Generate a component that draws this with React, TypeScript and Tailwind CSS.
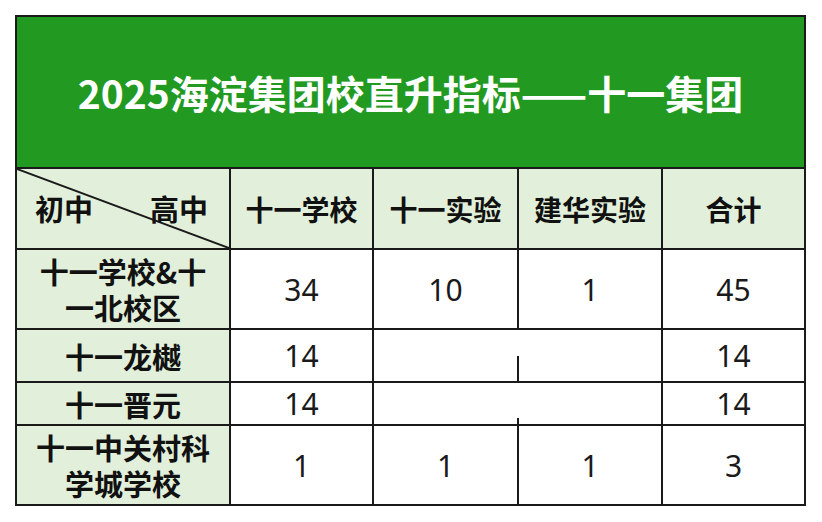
import React from "react";

const cjk = { fontFamily: '"Noto Sans CJK SC", "Noto Sans", sans-serif' };
const num = { fontFamily: '"Noto Sans", "Noto Sans CJK SC", sans-serif' };

function Label({ lines }: { lines: string[] }) {
  return (
    <div
      className="bg-[#e2efda] flex flex-col items-center justify-center text-center text-[29px] font-bold leading-[36px] text-[#111]"
      style={cjk}
    >
      {lines.map((l) => (
        <div key={l} className="h-[36px] leading-[36px]">
          {l}
        </div>
      ))}
    </div>
  );
}

function Head({ children }: { children: React.ReactNode }) {
  return (
    <div
      className="bg-[#e2efda] flex items-center justify-center text-[28px] font-bold text-[#111]"
      style={cjk}
    >
      {children}
    </div>
  );
}

function Num({ children }: { children?: React.ReactNode }) {
  return (
    <div
      className="bg-white flex items-center justify-center text-[30px] text-[#1a1a1a]"
      style={num}
    >
      {children}
    </div>
  );
}

export default function App() {
  return (
    <div className="w-[822px] h-[522px] bg-white pt-[15px] pl-[15px]">
      <div className="w-[791px] bg-[#1a1a1a] p-[2px] grid gap-[2px] grid-cols-[212px_141px_143px_142px_141px] grid-rows-[150px_79px_78px_51px_41px_78px]">
        <div
          className="col-span-5 bg-[#229a22] flex items-center justify-center text-white text-[39px] font-bold"
          style={cjk}
        >
          2025海淀集团校直升指标——十一集团
        </div>

        <div className="relative bg-[#e2efda] flex items-center justify-between pl-[18px] pr-[21px] text-[29px] font-bold text-[#111]" style={cjk}>
          <svg className="absolute inset-0" width="212" height="79" viewBox="0 0 212 79">
            <line x1="0" y1="0" x2="212" y2="79" stroke="#1a1a1a" strokeWidth="2" />
          </svg>
          <span className="relative">初中</span>
          <span className="relative">高中</span>
        </div>
        <Head>十一学校</Head>
        <Head>十一实验</Head>
        <Head>建华实验</Head>
        <Head>合计</Head>

        <Label lines={["十一学校&十", "一北校区"]} />
        <Num>34</Num>
        <Num>10</Num>
        <Num>1</Num>
        <Num>45</Num>

        <Label lines={["十一龙樾"]} />
        <Num>14</Num>
        <div className="col-span-2 bg-white relative">
          <div className="absolute left-[143px] top-[26px] bottom-0 w-[2px] bg-[#1a1a1a]" />
        </div>
        <Num>14</Num>

        <Label lines={["十一晋元"]} />
        <Num>14</Num>
        <div className="col-span-2 bg-white relative">
          <div className="absolute left-[143px] bottom-0 h-[6px] w-[2px] bg-[#1a1a1a]" />
        </div>
        <Num>14</Num>

        <Label lines={["十一中关村科", "学城学校"]} />
        <Num>1</Num>
        <Num>1</Num>
        <Num>1</Num>
        <Num>3</Num>
      </div>
    </div>
  );
}
